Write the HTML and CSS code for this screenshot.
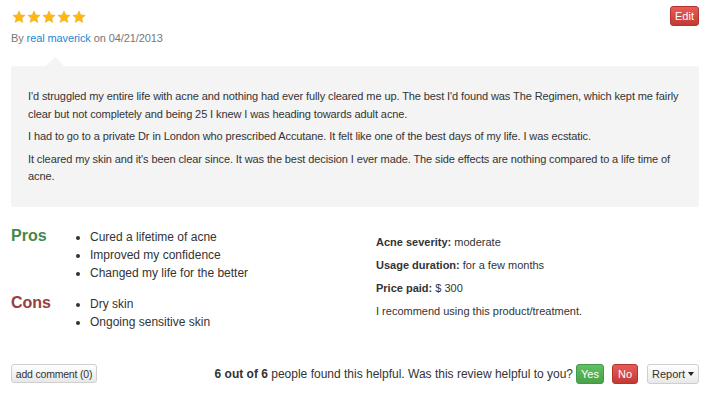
FILE: index.html
```html
<!DOCTYPE html>
<html>
<head>
<meta charset="utf-8">
<link rel="stylesheet" href="styles.css">
</head>
<body>
<div class="review">
  <div class="head">
    <div class="meta">
      <div class="stars">
        <svg class="star" viewBox="0 0 24 24"><path d="M12 1.5l3.1 7 7.4.6-5.6 4.9 1.7 7.4L12 17.5l-6.6 3.9 1.7-7.4L1.5 9.1l7.4-.6z"/></svg>
        <svg class="star" viewBox="0 0 24 24"><path d="M12 1.5l3.1 7 7.4.6-5.6 4.9 1.7 7.4L12 17.5l-6.6 3.9 1.7-7.4L1.5 9.1l7.4-.6z"/></svg>
        <svg class="star" viewBox="0 0 24 24"><path d="M12 1.5l3.1 7 7.4.6-5.6 4.9 1.7 7.4L12 17.5l-6.6 3.9 1.7-7.4L1.5 9.1l7.4-.6z"/></svg>
        <svg class="star" viewBox="0 0 24 24"><path d="M12 1.5l3.1 7 7.4.6-5.6 4.9 1.7 7.4L12 17.5l-6.6 3.9 1.7-7.4L1.5 9.1l7.4-.6z"/></svg>
        <svg class="star" viewBox="0 0 24 24"><path d="M12 1.5l3.1 7 7.4.6-5.6 4.9 1.7 7.4L12 17.5l-6.6 3.9 1.7-7.4L1.5 9.1l7.4-.6z"/></svg>
      </div>
      <div class="byline">By <a href="#">real maverick</a> on 04/21/2013</div>
    </div>
    <a class="btn btn-red btn-edit" href="#">Edit</a>
  </div>

  <div class="body">
    <p>I'd struggled my entire life with acne and nothing had ever fully cleared me up. The best I'd found was The Regimen, which kept me fairly clear but not completely and being 25 I knew I was heading towards adult acne.</p>
    <p>I had to go to a private Dr in London who prescribed Accutane. It felt like one of the best days of my life. I was ecstatic.</p>
    <p>It cleared my skin and it's been clear since. It was the best decision I ever made. The side effects are nothing compared to a life time of acne.</p>
  </div>

  <div class="details">
    <div class="procon">
      <div class="group">
        <div class="label pros">Pros</div>
        <ul>
          <li>Cured a lifetime of acne</li>
          <li>Improved my confidence</li>
          <li>Changed my life for the better</li>
        </ul>
      </div>
      <div class="group">
        <div class="label cons">Cons</div>
        <ul>
          <li>Dry skin</li>
          <li>Ongoing sensitive skin</li>
        </ul>
      </div>
    </div>
    <div class="facts">
      <div><b>Acne severity:</b> moderate</div>
      <div><b>Usage duration:</b> for a few months</div>
      <div><b>Price paid:</b> $ 300</div>
      <div>I recommend using this product/treatment.</div>
    </div>
  </div>

  <div class="foot">
    <a class="btn btn-default btn-comment" href="#">add comment (0)</a>
    <div class="helpful">
      <span class="htext"><b>6 out of 6</b> people found this helpful. Was this review helpful to you?</span>
      <a class="btn btn-green btn-yes" href="#">Yes</a>
      <a class="btn btn-red btn-no" href="#">No</a>
      <a class="btn btn-default btn-report" href="#">Report <span class="caret"></span></a>
    </div>
  </div>
</div>
</body>
</html>
```

FILE: styles.css
```css
html, body {
  margin: 0;
  padding: 0;
  background: #fff;
}
body {
  font-family: "Liberation Sans", Arial, Helvetica, sans-serif;
  color: #333;
  font-size: 12px;
  width: 711px;
  height: 400px;
  overflow: hidden;
}
.review {
  padding: 6px 12px 0 11px;
}
.head {
  display: flex;
  justify-content: space-between;
  align-items: flex-start;
}
.stars {
  display: flex;
  gap: 1px;
  padding-top: 4px;
  margin-left: 1px;
}
.star {
  width: 14px;
  height: 14px;
  fill: #fdb813;
  stroke: #f0a000;
  stroke-width: 0.8;
}
.byline {
  margin-top: 6px;
  font-size: 11px;
  letter-spacing: -0.1px;
  color: #777;
  line-height: 16px;
}
.byline a {
  color: #1a8ad0;
  text-decoration: none;
}
.btn {
  display: inline-flex;
  align-items: center;
  justify-content: center;
  height: 20px;
  box-sizing: border-box;
  padding: 0 6px;
  border-radius: 3px;
  font-size: 11px;
  text-decoration: none;
  border: 1px solid rgba(0,0,0,0.15);
}
.btn-red {
  color: #fff;
  background: linear-gradient(#e85c58, #c23a34);
  border-color: #b5332e;
}
.btn-green {
  color: #fff;
  background: linear-gradient(#5fc15f, #4aa14a);
  border-color: #44964a;
}
.btn-default {
  color: #333;
  background: linear-gradient(#ffffff, #e8e8e8);
  border-color: #cfcfcf;
}
.btn-edit {
  width: 29px;
  padding: 0;
}
.body {
  position: relative;
  margin-top: 20px;
  background: #f4f4f4;
  border-radius: 3px;
  padding: 22px 20px 16px 17px;
  min-height: 102px;
}
.body::before {
  content: "";
  position: absolute;
  top: -9px;
  left: 35px;
  border-left: 9px solid transparent;
  border-right: 9px solid transparent;
  border-bottom: 9px solid #f4f4f4;
}
.body p {
  margin: 0 0 5px;
  line-height: 17.5px;
  font-size: 11px;
  letter-spacing: -0.1px;
}
.details {
  display: flex;
  margin-top: 21px;
}
.procon {
  width: 365px;
}
.group {
  display: flex;
  margin-bottom: 13px;
}
.label {
  width: 55px;
  font-size: 16px;
  font-weight: bold;
  line-height: 18px;
  margin-top: -1px;
}
.pros { color: #46884a; }
.cons { color: #97403d; }
ul {
  margin: 0;
  padding: 0 0 0 24px;
  list-style: disc;
}
li {
  line-height: 18px;
  font-size: 12px;
  padding-left: 0;
}
.facts {
  padding-top: 7px;
  font-size: 11px;
}
.facts div {
  line-height: 14px;
  margin-bottom: 9px;
}
.foot {
  display: flex;
  justify-content: space-between;
  align-items: center;
  margin-top: 20px;
}
.btn-comment {
  height: 19px;
  width: 86px;
  padding: 0;
  font-size: 10.5px;
  letter-spacing: -0.2px;
}
.helpful {
  display: flex;
  align-items: center;
}
.htext {
  font-size: 12px;
  margin-right: 3px;
}
.btn-yes {
  width: 28px;
  padding: 0;
  margin-right: 8px;
}
.btn-no {
  width: 26px;
  padding: 0;
  margin-right: 9px;
}
.btn-report {
  width: 52px;
  padding: 0;
}
.caret {
  display: inline-block;
  margin-left: 3px;
  border-left: 3.5px solid transparent;
  border-right: 3.5px solid transparent;
  border-top: 4px solid #222;
}
```
